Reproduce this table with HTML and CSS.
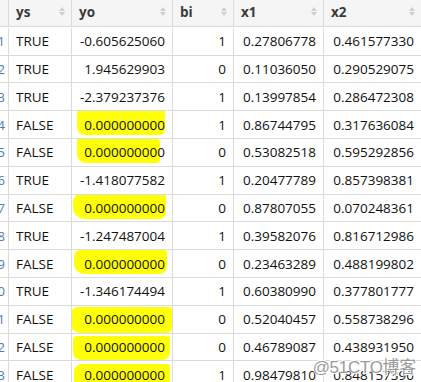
FILE: index.html
```html
<!DOCTYPE html>
<html>
<head>
<meta charset="utf-8">
<link rel="stylesheet" href="styles.css">
</head>
<body>
<div class="viewer">
  <div class="grid">
    <div class="row head">
      <div class="cell num"></div>
      <div class="cell hd"><span>ys</span><i class="sort"></i></div>
      <div class="cell hd"><span>yo</span><i class="sort"></i></div>
      <div class="cell hd"><span>bi</span><i class="sort"></i></div>
      <div class="cell hd"><span>x1</span><i class="sort"></i></div>
      <div class="cell hd"><span>x2</span><i class="sort"></i></div>
    </div>
    <div class="row"><div class="cell num"><span>1</span></div><div class="cell txt">TRUE</div><div class="cell n">-0.605625060</div><div class="cell n">1</div><div class="cell n">0.27806778</div><div class="cell n">0.461577330</div></div>
    <div class="row"><div class="cell num"><span>2</span></div><div class="cell txt">TRUE</div><div class="cell n">1.945629903</div><div class="cell n">0</div><div class="cell n">0.11036050</div><div class="cell n">0.290529075</div></div>
    <div class="row"><div class="cell num"><span>3</span></div><div class="cell txt">TRUE</div><div class="cell n">-2.379237376</div><div class="cell n">1</div><div class="cell n">0.13997854</div><div class="cell n">0.286472308</div></div>
    <div class="row"><div class="cell num"><span>4</span></div><div class="cell txt">FALSE</div><div class="cell n hl hl-a"><span>0.000000000</span></div><div class="cell n">1</div><div class="cell n">0.86744795</div><div class="cell n">0.317636084</div></div>
    <div class="row"><div class="cell num"><span>5</span></div><div class="cell txt">FALSE</div><div class="cell n hl hl-b"><span>0.000000000</span></div><div class="cell n">0</div><div class="cell n">0.53082518</div><div class="cell n">0.595292856</div></div>
    <div class="row"><div class="cell num"><span>6</span></div><div class="cell txt">TRUE</div><div class="cell n">-1.418077582</div><div class="cell n">1</div><div class="cell n">0.20477789</div><div class="cell n">0.857398381</div></div>
    <div class="row"><div class="cell num"><span>7</span></div><div class="cell txt">FALSE</div><div class="cell n hl hl-c"><span>0.000000000</span></div><div class="cell n">0</div><div class="cell n">0.87807055</div><div class="cell n">0.070248361</div></div>
    <div class="row"><div class="cell num"><span>8</span></div><div class="cell txt">TRUE</div><div class="cell n">-1.247487004</div><div class="cell n">1</div><div class="cell n">0.39582076</div><div class="cell n">0.816712986</div></div>
    <div class="row"><div class="cell num"><span>9</span></div><div class="cell txt">FALSE</div><div class="cell n hl hl-d"><span>0.000000000</span></div><div class="cell n">0</div><div class="cell n">0.23463289</div><div class="cell n">0.488199802</div></div>
    <div class="row"><div class="cell num"><span>10</span></div><div class="cell txt">TRUE</div><div class="cell n">-1.346174494</div><div class="cell n">1</div><div class="cell n">0.60380990</div><div class="cell n">0.377801777</div></div>
    <div class="row"><div class="cell num"><span>11</span></div><div class="cell txt">FALSE</div><div class="cell n hl hl-e"><span>0.000000000</span></div><div class="cell n">0</div><div class="cell n">0.52040457</div><div class="cell n">0.558738296</div></div>
    <div class="row"><div class="cell num"><span>12</span></div><div class="cell txt">FALSE</div><div class="cell n hl hl-f"><span>0.000000000</span></div><div class="cell n">0</div><div class="cell n">0.46789087</div><div class="cell n">0.438931950</div></div>
    <div class="row"><div class="cell num"><span>13</span></div><div class="cell txt">FALSE</div><div class="cell n hl hl-g"><span>0.000000000</span></div><div class="cell n">1</div><div class="cell n">0.98479810</div><div class="cell n">0.848157390</div></div>
  </div>
  <div class="watermark">@51CTO博客</div>
</div>
</body>
</html>
```

FILE: styles.css
```css
html, body {
  margin: 0;
  padding: 0;
  background: #ffffff;
  overflow: hidden;
}
.viewer {
  position: relative;
  width: 421px;
  height: 382px;
  overflow: hidden;
  font-family: "Open Sans", "Liberation Sans", sans-serif;
  font-size: 13.5px;
  color: #111;
}
.grid {
  display: grid;
  grid-template-columns: 9px 63px 101px 61px 90px 98px;
  grid-auto-rows: 27.8px;
}
.row {
  display: contents;
}
.cell {
  box-sizing: border-box;
  border-right: 1px solid #dcdcdc;
  border-bottom: 1px solid #dcdcdc;
  display: flex;
  align-items: center;
  overflow: hidden;
  white-space: nowrap;
  position: relative;
}
.head .cell {
  height: 27px;
  background: #f5f5f5;
}
.hd {
  justify-content: space-between;
  padding: 0 6px 2px 7px;
  font-weight: 700;
  color: #3a3a3a;
}
.sort {
  display: flex;
  flex-direction: column;
  align-items: center;
  gap: 1px;
  width: 7px;
  margin-top: -2px;
}
.sort::before,
.sort::after {
  content: "";
  width: 0;
  height: 0;
  border-left: 3.5px solid transparent;
  border-right: 3.5px solid transparent;
}
.sort::before {
  border-bottom: 4px solid #cfcfcf;
}
.sort::after {
  border-top: 4px solid #cfcfcf;
}
.num {
  justify-content: flex-end;
  padding-right: 3px;
  color: #4f7bb3;
  font-size: 13px;
}
.num span {
  flex-shrink: 0;
}
.txt {
  padding-left: 7px;
}
.n {
  justify-content: flex-end;
  padding-right: 7px;
}
.hl span {
  position: relative;
  z-index: 1;
}
.hl::before {
  content: "";
  position: absolute;
  background: #ffff0a;
  z-index: 0;
}
.hl-a::before { left: 5px; right: 7px; top: -5px; bottom: 3px; border-radius: 5px 3px 6px 8px; }
.hl-b::before { left: 5px; right: 12px; top: -3px; bottom: 3px; border-radius: 4px 7px 3px 9px; }
.hl-c::before { left: 1px; right: 6px; top: -2px; bottom: 2px; border-radius: 9px 4px 7px 12px; }
.hl-d::before { left: 2px; right: 5px; top: 0px; bottom: 3px; border-radius: 6px 3px 8px 10px; }
.hl-e::before { left: -3px; right: 0px; top: 1px; bottom: 0px; border-radius: 10px 3px 5px 12px; }
.hl-f::before { left: 1px; right: 2px; top: 2px; bottom: 0px; border-radius: 4px 2px 8px 8px; }
.hl-g::before { left: 2px; right: 2px; top: 3px; bottom: -6px; border-radius: 8px 3px 3px 6px; }
.watermark {
  position: absolute;
  right: 5px;
  bottom: 4px;
  font-family: "Liberation Sans", "Noto Sans CJK SC", sans-serif;
  font-size: 17px;
  color: #9a9a9a;
  text-shadow: 0 0 2px #fff, 0 0 2px #fff, 1px 1px 0 #fff, -1px -1px 0 #fff;
  letter-spacing: -0.3px;
}
```
